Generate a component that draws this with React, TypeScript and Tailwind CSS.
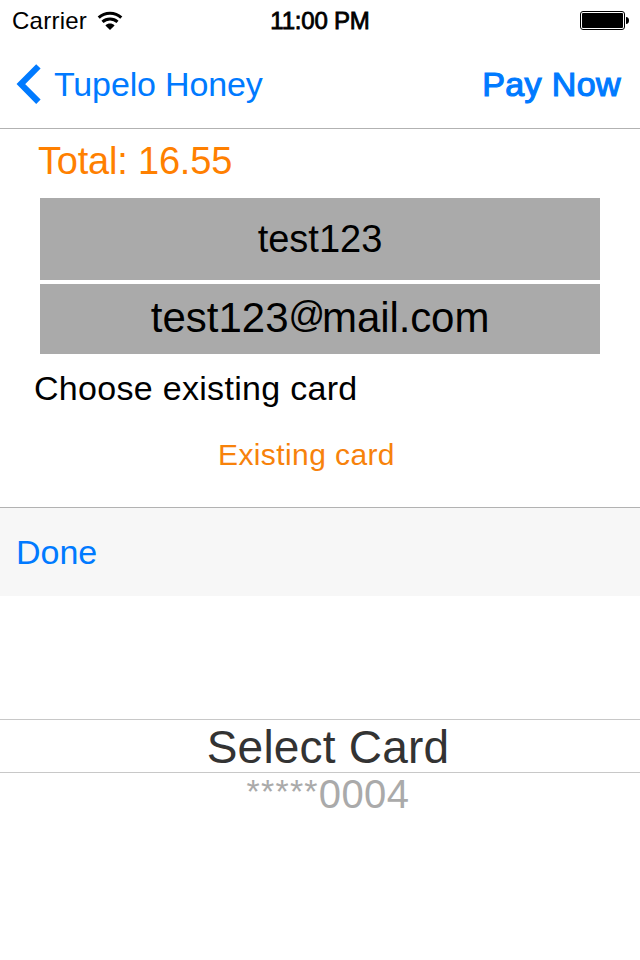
function WifiIcon() {
  return (
    <svg width="26" height="20" viewBox="0 0 26 20" fill="none" stroke="#000" strokeWidth="3">
      <path d="M1.7 6.6C8 .7 18 .7 24.3 6.6" />
      <path d="M5.5 10.9C9.7 7 16.3 7 20.5 10.9" />
      <path d="M8.4 14.4C11 12 15 12 17.6 14.4L13 19Z" fill="#000" stroke="none" />
    </svg>
  );
}

function BatteryIcon() {
  return (
    <svg width="50" height="20" viewBox="0 0 50 20">
      <rect x="0.5" y="0.5" width="44" height="18" rx="2.5" fill="none" stroke="#000" />
      <rect x="2" y="2" width="41" height="15" rx="1" fill="#000" />
      <path d="M46 6C48 6 49 7.3 49 9.5S48 13 46 13Z" fill="#000" />
    </svg>
  );
}

function StatusBar() {
  return (
    <div className="grid h-10 grid-cols-3 items-center pt-px text-2xl">
      <div className="flex items-center gap-[10px] pl-3">
        <span className="tracking-[0.25px]">Carrier</span>
        <WifiIcon />
      </div>
      <span className="text-center tracking-[-0.2px] [-webkit-text-stroke:0.8px_black]">11:00 PM</span>
      <div className="flex justify-end pr-[10px]">
        <BatteryIcon />
      </div>
    </div>
  );
}

function NavBar() {
  return (
    <nav className="flex h-[89px] items-center justify-between border-b border-[#b2b2b2] pr-[19px] pl-4 text-[34px] text-[#007aff]">
      <button className="flex items-center gap-[13px]">
        <svg width="25" height="40" viewBox="0 0 25 40" fill="none" stroke="currentColor" strokeWidth="6.2">
          <path d="M22.4 2.4L4.9 20.1L22.4 37.8" />
        </svg>
        <span className="tracking-[-0.15px]">Tupelo Honey</span>
      </button>
      <button className="tracking-[0.4px] [-webkit-text-stroke:1.2px_#007aff]">Pay Now</button>
    </nav>
  );
}

export default function App() {
  return (
    <main className="flex h-[960px] w-[640px] flex-col overflow-hidden bg-white font-['Liberation_Sans',Arial,sans-serif] text-black">
      <StatusBar />
      <NavBar />
      <section className="flex h-[378px] flex-col">
        <h1 className="mt-[11px] ml-[38px] h-[42px] text-[38px] leading-[42px] tracking-[-0.2px] text-[#ff8000]">
          Total: 16.55
        </h1>
        <div className="mx-10 mt-4 flex flex-col gap-1">
          <div className="flex h-[82px] items-center justify-center bg-[#aaaaaa] text-[38px]">test123</div>
          <div className="h-[70px] bg-[#aaaaaa] text-center text-[42px] leading-[68px]">
            test123<span className="align-[5px] text-[36px] leading-none tracking-[-3px]">@</span>
            <span className="tracking-[-0.1px]">mail.com</span>
          </div>
        </div>
        <p className="mt-[14px] ml-[34px] h-10 text-[34px] leading-10 tracking-[0.3px]">Choose existing card</p>
        <button className="mt-[27px] ml-[218px] h-10 self-start text-[30px] leading-10 tracking-[0.4px] text-[#f7820b]">
          Existing card
        </button>
      </section>
      <div className="flex h-[89px] items-center border-t border-[#b2b2b2] bg-[#f7f7f7] pl-4 text-[34px] text-[#007aff]">
        <button>Done</button>
      </div>
      <section className="flex grow flex-col items-center pt-[123px]">
        <div className="flex h-[54px] w-full items-center justify-center border-y border-[#c8c8c8] pt-[2px] pl-4 text-[46px] tracking-[0.2px] text-[#333]">
          Select Card
        </div>
        <div className="h-[42px] pl-4 text-[40px] leading-[42px] text-[#aaa]">
          <span className="align-[5px] text-[34px] leading-none tracking-[1.2px]">*****</span>
          <span className="tracking-[0.4px]">0004</span>
        </div>
      </section>
    </main>
  );
}
